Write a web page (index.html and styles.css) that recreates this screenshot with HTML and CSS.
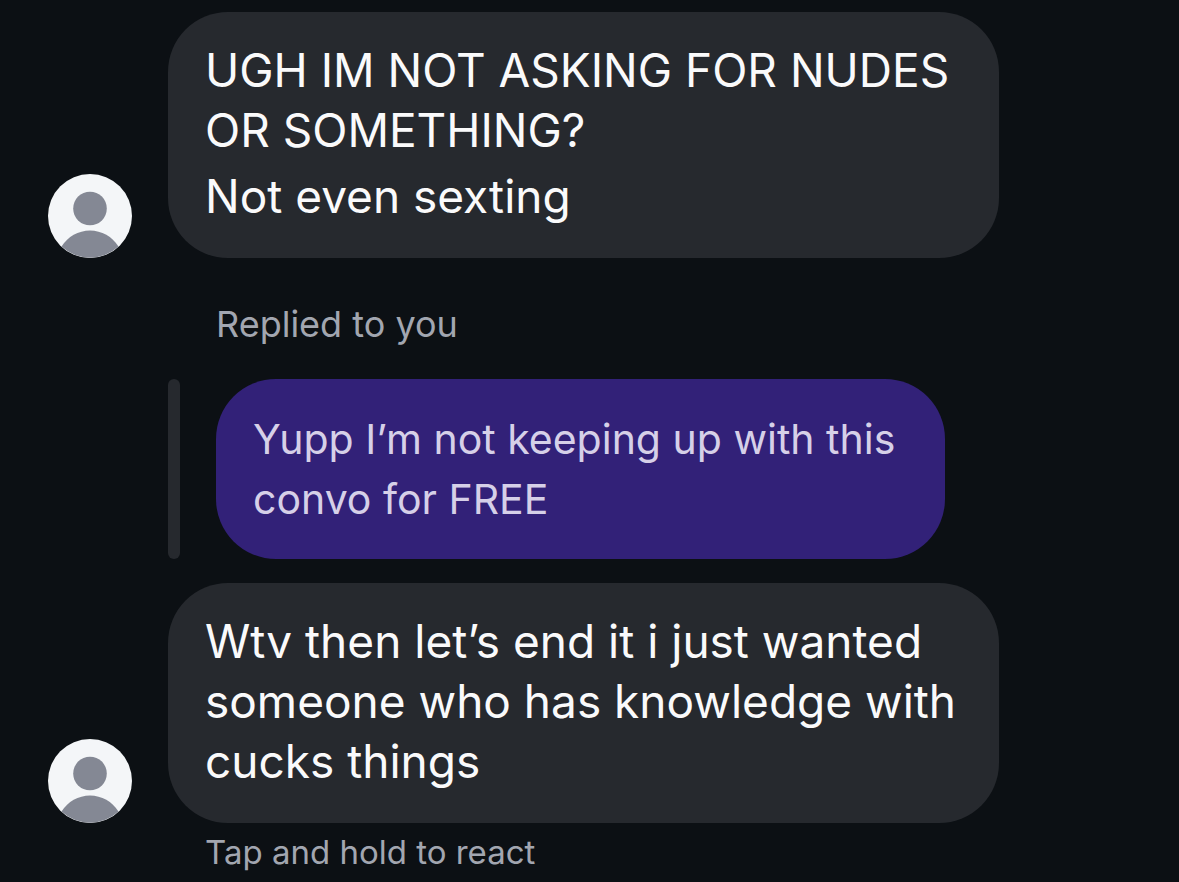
FILE: index.html
```html
<!DOCTYPE html>
<html lang="en">
<head>
    <meta charset="UTF-8">
    <meta name="viewport" content="width=device-width, initial-scale=1.0">
    <title>Messages</title>
    <link rel="stylesheet" href="styles.css">
</head>
<body>

    <main class="chat">
        <!-- First message -->
        <div class="message">
            <svg class="avatar" viewBox="0 0 84 84" aria-hidden="true">
                <circle cx="42" cy="42" r="42" fill="#f4f6f8"/>
                <circle cx="42" cy="34.500" r="16.800" fill="#848894"/>
                <path d="M13.500 72.500A33.500 33.500 0 0 1 70.500 72.500A42 42 0 0 1 13.500 72.500z" fill="#848894"/>
            </svg>
            <div class="bubble">
                <p>UGH IM NOT ASKING FOR NUDES OR SOMETHING?</p>
                <p class="extra">Not even sexting</p>
            </div>
        </div>

        <!-- Quoted reply -->
        <p class="reply-label">Replied to you</p>
        <blockquote class="quote">
            <p class="quote-bubble">Yupp I’m not keeping up with this convo for FREE</p>
        </blockquote>

        <!-- Second message -->
        <div class="message">
            <svg class="avatar" viewBox="0 0 84 84" aria-hidden="true">
                <circle cx="42" cy="42" r="42" fill="#f4f6f8"/>
                <circle cx="42" cy="34.500" r="16.800" fill="#848894"/>
                <path d="M13.500 72.500A33.500 33.500 0 0 1 70.500 72.500A42 42 0 0 1 13.500 72.500z" fill="#848894"/>
            </svg>
            <div class="bubble">
                <p>Wtv then let’s end it i just wanted someone who has knowledge with cucks things</p>
            </div>
        </div>
        <p class="hint">Tap and hold to react</p>
    </main>

</body>
</html>
```
FILE: styles.css
```css
body {
    margin: 0;
    background-color: #0c1014;
    color: #fafafb;
    font-family: Inter, "Liberation Sans", sans-serif;
}

p {
    margin: 0;
}

.chat {
    padding: 12px 48px 0;
}

.message {
    display: flex;
    align-items: flex-end;
    gap: 36px;
}

.avatar {
    flex: none;
    width: 84px;
    height: 84px;
}

.bubble {
    box-sizing: border-box;
    flex: 0 1 831px;
    padding: 28px 37px 32px;
    border-radius: 60px;
    background-color: #26292e;
    font-size: 46px;
    line-height: 60px;
}

.extra {
    margin-top: 6px;
}

.reply-label {
    margin: 43px 0 31px 168px;
    color: #a2a6b0;
    font-size: 36px;
    line-height: 47px;
}

.quote {
    display: flex;
    margin: 0 0 24px 120px;
}

/* Grey bar beside the quoted message */
.quote::before {
    content: "";
    width: 12px;
    margin-right: 36px;
    border-radius: 6px;
    background-color: #26292e;
}

.quote-bubble {
    box-sizing: border-box;
    flex: 0 1 729px;
    padding: 30px 37px;
    border-radius: 60px;
    background-color: #322178;
    color: #d6d0e8;
    font-size: 41px;
    line-height: 60px;
}

.hint {
    margin-left: 157px;
    color: #a2a6b0;
    font-size: 33px;
    line-height: 59px;
}
```
